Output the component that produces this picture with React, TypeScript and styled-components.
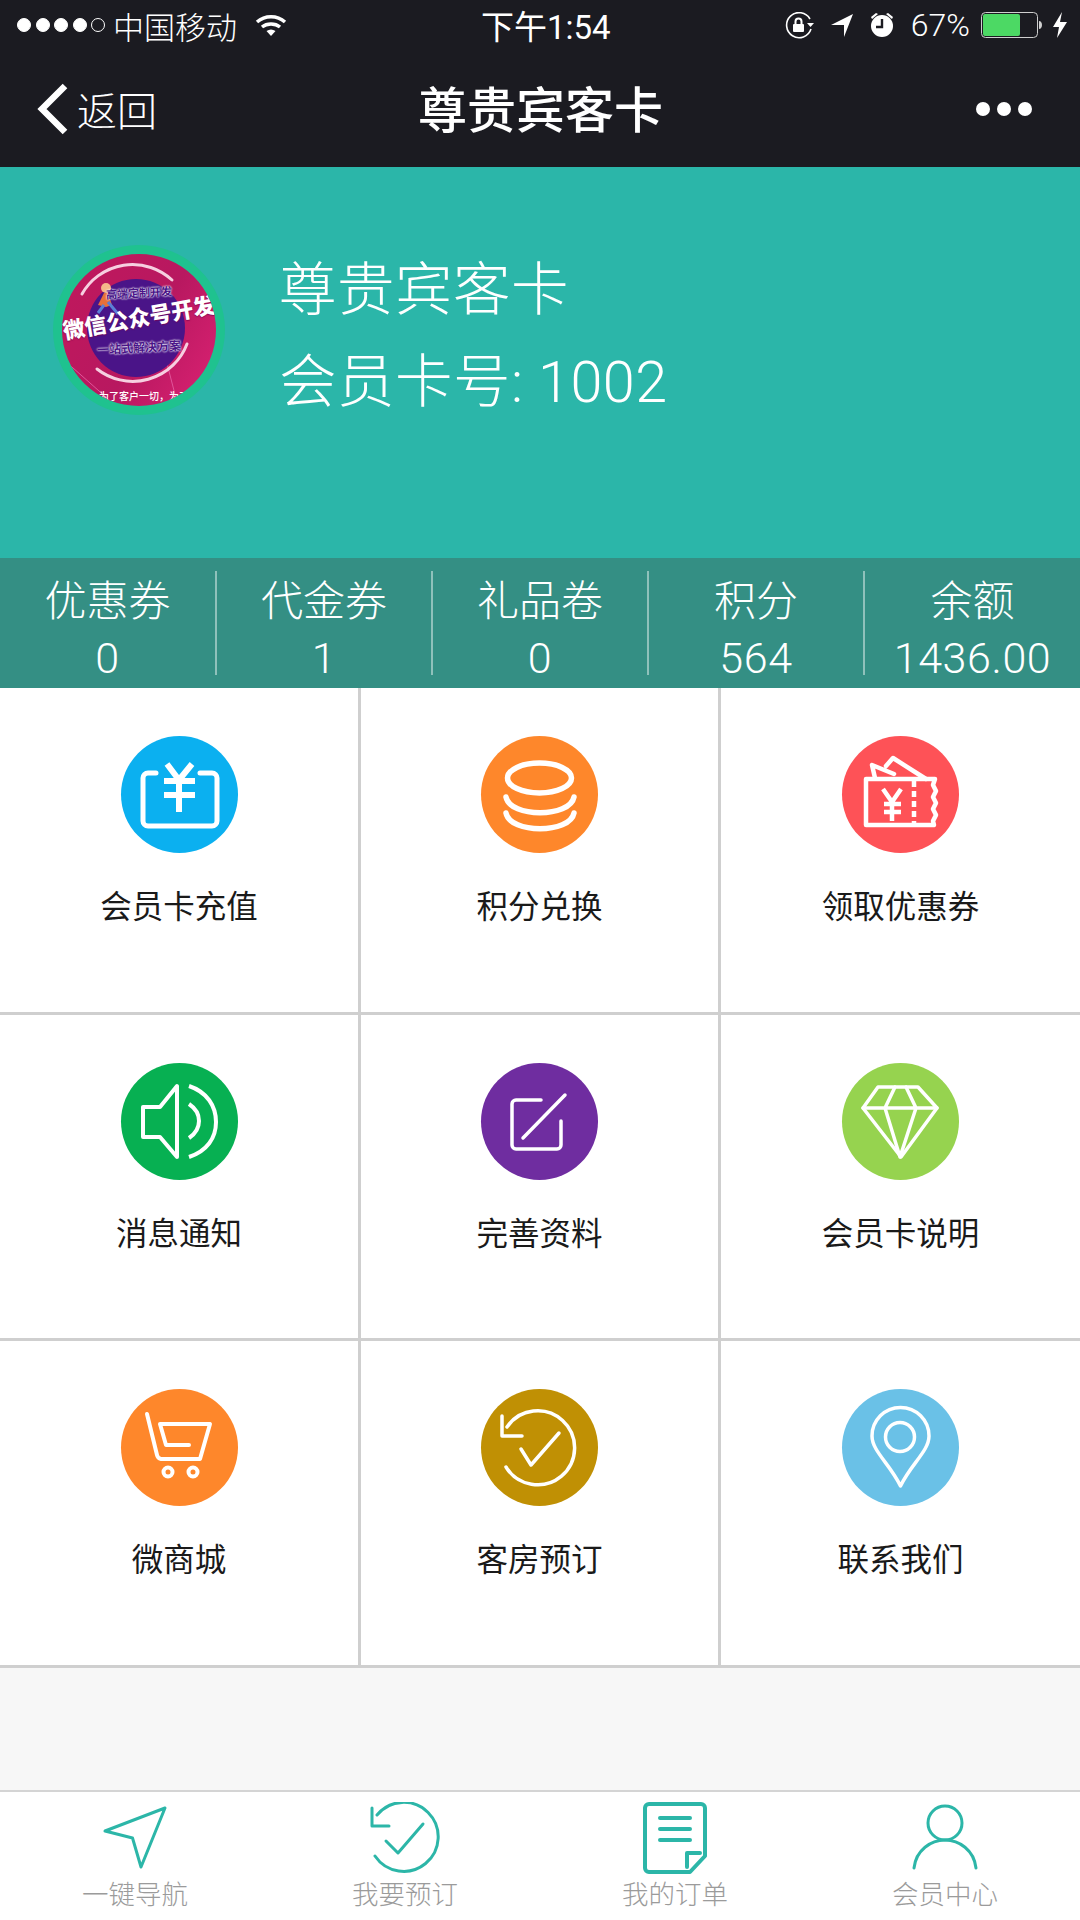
import React from 'react';
import styled, { createGlobalStyle } from 'styled-components';

const GlobalStyle = createGlobalStyle`
  html, body {
    margin: 0;
    padding: 0;
    background: #fff;
  }
  * {
    box-sizing: border-box;
  }
`;

const Page = styled.div`
  width: 1080px;
  height: 1920px;
  display: flex;
  flex-direction: column;
  overflow: hidden;
  background: #f7f7f7;
  font-family: Roboto, "Noto Sans CJK SC", sans-serif;
  font-weight: 300;
`;

const Header = styled.div`
  height: 167px;
  flex: none;
  background: #1b1b21;
  color: #fff;
`;

const StatusBar = styled.div`
  height: 50px;
  display: flex;
  align-items: center;
  font-size: 33px;
  font-weight: 400;
  padding-right: 13px;
`;

const StatusLeft = styled.div`
  width: 481px;
  display: flex;
  align-items: center;
  padding-left: 17px;
`;

const Carrier = styled.span`
  margin: 0 18px 0 8px;
  font-size: 31px;
  font-weight: 300;
`;

const StatusRight = styled.div`
  margin-left: auto;
  display: flex;
  align-items: center;
  gap: 17px;
`;

const Battery = styled.span`
  font-size: 32px;
  font-weight: 300;
`;

const NavBar = styled.div`
  height: 117px;
  display: grid;
  grid-template-columns: 1fr auto 1fr;
  align-items: center;
  padding: 0 48px 0 37px;
`;

const BackButton = styled.div`
  display: flex;
  align-items: center;
  gap: 9px;
  font-size: 40px;
`;

const Title = styled.div`
  font-size: 49px;
  font-weight: 500;
  transform: translate(6px, -2px);
`;

const MoreDots = styled.div`
  justify-self: end;
  display: flex;
  gap: 7px;
`;

const MoreDot = styled.i`
  width: 14px;
  height: 14px;
  border-radius: 50%;
  background: #fff;
`;

const Hero = styled.div`
  height: 391px;
  flex: none;
  display: flex;
  align-items: flex-start;
  gap: 54px;
  padding: 78px 0 0 53px;
  background: #2bb6a9;
  color: #fff;
`;

const Avatar = styled.div`
  position: relative;
  width: 172px;
  height: 170px;
  flex: none;
  overflow: hidden;
  border-radius: 50%;
  border: 9px solid #1fc28f;
  background: linear-gradient(120deg, #c0185c 0%, #b81860 55%, #dc2273 100%);
  display: flex;
  flex-direction: column;
  align-items: center;
  justify-content: center;
`;

const AvatarArt = styled.svg`
  position: absolute;
  inset: 0;
`;

const AvatarLines = styled.div`
  position: relative;
  display: flex;
  flex-direction: column;
  align-items: center;
  white-space: nowrap;
  transform: translateY(-9px);
`;

const AvatarSmall = styled.div<{ $size: number }>`
  font-size: ${(p) => p.$size}px;
  font-weight: 700;
  line-height: 18px;
  color: #4a1488;
  text-shadow: 0 0 2px #fff, 0 0 2px #fff;
  transform: rotate(-3deg);
`;

const AvatarBanner = styled.div`
  font-size: 22px;
  font-weight: 900;
  line-height: 32px;
  margin-bottom: 4px;
  color: #fff;
  text-shadow: 0 1px 1px rgba(120, 0, 80, 0.7);
  transform: rotate(-10deg);
`;

const AvatarFoot = styled.div`
  position: absolute;
  left: 0;
  right: 0;
  bottom: 3px;
  font-size: 10px;
  font-weight: 500;
  text-align: center;
  white-space: nowrap;
  color: #fff;
`;

const HeroText = styled.div`
  font-size: 57.5px;
  line-height: 92px;
  letter-spacing: 0.5px;
`;

const StatsBar = styled.div`
  height: 130px;
  flex: none;
  display: grid;
  grid-template-columns: 215px 216px 216px 216px 217px;
  align-items: center;
  background: #348f84;
  color: #fff;
`;

const Stat = styled.div<{ $first?: boolean }>`
  height: 104px;
  text-align: center;
  border-left: ${(p) => (p.$first ? 'none' : '2px solid rgba(255, 255, 255, 0.45)')};
`;

const StatLabel = styled.div`
  margin-top: 2px;
  font-size: 42px;
  line-height: 58px;
`;

const StatValue = styled.div`
  font-size: 43px;
  line-height: 54px;
  letter-spacing: 0.6px;
`;

const Grid = styled.div`
  flex: none;
  display: grid;
  grid-template-columns: 361px 360px 359px;
  grid-template-rows: 327px 326px 327px;
  background: #fff;
`;

const Cell = styled.div<{ $edge?: boolean }>`
  display: flex;
  flex-direction: column;
  align-items: center;
  padding-top: 48px;
  border-bottom: 3px solid #cfcfcf;
  border-right: ${(p) => (p.$edge ? 'none' : '3px solid #cfcfcf')};
`;

const IconDisc = styled.div<{ $color: string }>`
  width: 117px;
  height: 117px;
  border-radius: 50%;
  background: ${(p) => p.$color};
  color: #fff;
`;

const CellLabel = styled.div`
  margin-top: 33px;
  font-size: 31.5px;
  font-weight: 400;
  line-height: 44px;
  color: #1a1a1a;
`;

const Spacer = styled.div`
  flex: 1;
`;

const TabBar = styled.div`
  height: 130px;
  flex: none;
  display: grid;
  grid-template-columns: repeat(4, 270px);
  background: #fff;
  border-top: 2px solid #d4d4d4;
`;

const Tab = styled.div`
  display: flex;
  flex-direction: column;
  align-items: center;
  padding-top: 10px;
  color: #2cb6a8;
`;

const TabLabel = styled.div`
  font-size: 26.5px;
  line-height: 34px;
  color: #9b9b9b;
  margin-top: 4px;
`;

const SignalRow = styled.div`
  display: flex;
  align-items: center;
  gap: 4.5px;
`;

const SignalDot = styled.i<{ $off?: boolean }>`
  width: 14px;
  height: 14px;
  border-radius: 50%;
  background: ${(p) => (p.$off ? 'transparent' : '#fff')};
  border: 1px solid #fff;
`;

const DiscSvg: React.FC<{ children: React.ReactNode; width?: number }> = ({ children, width = 4 }) => (
  <svg
    width="117"
    height="117"
    viewBox="0 0 117 117"
    fill="none"
    stroke="currentColor"
    strokeWidth={width}
    strokeLinecap="round"
    strokeLinejoin="round"
  >
    {children}
  </svg>
);

const cells = [
  {
    label: '会员卡充值',
    color: '#0bb0f0',
    icon: (
      <DiscSvg width={5}>
        <path d="M35 37h-8a5 5 0 0 0-5 5v43a5 5 0 0 0 5 5h64a5 5 0 0 0 5-5V42a5 5 0 0 0-5-5h-12" />
        <path d="M46 28l12 16 13-16M58 44v32M43 45h31M43 59h31" strokeWidth="6" strokeLinecap="butt" />
      </DiscSvg>
    ),
  },
  {
    label: '积分兑换',
    color: '#fe872b',
    icon: (
      <DiscSvg width={5.5}>
        <ellipse cx="58.5" cy="42" rx="32" ry="15" />
        <path d="M25 61c4 21 64 21 68 0M25 77c4 21 64 21 68 0" />
      </DiscSvg>
    ),
  },
  {
    label: '领取优惠券',
    color: '#fe5257',
    icon: (
      <DiscSvg width={4.5}>
        <path d="M33 42l-3-13 22 9M44 30l7-8 33 21" />
        <path d="M24 43h69l-2 6 3 6-3 6 3 6-3 6 3 6-3 6 1 4H24z" />
        <path d="M72 45v48" strokeDasharray="6 4" strokeLinecap="butt" />
        <path d="M41 53l9 13 9-13M50 66v19M42 68h17M42 76h17" strokeLinecap="butt" />
      </DiscSvg>
    ),
  },
  {
    label: '消息通知',
    color: '#07b052',
    icon: (
      <DiscSvg width={4}>
        <path d="M56 23v71L39 74H22V44h17z" />
        <path d="M68 23c18 6 27 20 27 36s-9 29-27 35M68 41c6 4 10 10 10 17s-4 13-10 17" strokeLinecap="butt" />
      </DiscSvg>
    ),
  },
  {
    label: '完善资料',
    color: '#6f2da0',
    icon: (
      <DiscSvg width={3.5}>
        <path d="M60 37H35a4 4 0 0 0-4 4v41a4 4 0 0 0 4 4h41a4 4 0 0 0 4-4V58" />
        <path d="M84 32L42 75" />
      </DiscSvg>
    ),
  },
  {
    label: '会员卡说明',
    color: '#96d34f',
    icon: (
      <DiscSvg width={3.5}>
        <path d="M36 24h40l19 21-36 49-38-49z" />
        <path d="M21 45h74M53 24L43 45l15 49 16-49-10-21" />
      </DiscSvg>
    ),
  },
  {
    label: '微商城',
    color: '#fe872b',
    icon: (
      <DiscSvg width={4}>
        <path d="M26 25l10 41a5 5 0 0 0 4 4h39l10-35H39l6 21h23" />
        <circle cx="47" cy="83" r="4.5" />
        <circle cx="72" cy="83" r="4.5" />
      </DiscSvg>
    ),
  },
  {
    label: '客房预订',
    color: '#c09004',
    icon: (
      <DiscSvg width={3.5}>
        <path d="M26 38a37 37 0 1 1-1 40" />
        <path d="M21 27v20h20" />
        <path d="M40 60l10 16 28-32" />
      </DiscSvg>
    ),
  },
  {
    label: '联系我们',
    color: '#6ac1e7',
    icon: (
      <DiscSvg width={3.5}>
        <path d="M58.5 97C48 75 30 62 30 47a28.5 28.5 0 0 1 57 0c0 15-18 28-28.5 50z" />
        <circle cx="58" cy="48" r="14.5" />
      </DiscSvg>
    ),
  },
];

const stats = [
  { label: '优惠券', value: '0' },
  { label: '代金券', value: '1' },
  { label: '礼品卷', value: '0' },
  { label: '积分', value: '564' },
  { label: '余额', value: '1436.00' },
];

const TabSvg: React.FC<{ children: React.ReactNode; width?: number }> = ({ children, width = 3 }) => (
  <svg
    width="80"
    height="72"
    viewBox="0 0 80 72"
    fill="none"
    stroke="currentColor"
    strokeWidth={width}
    strokeLinecap="round"
    strokeLinejoin="round"
  >
    {children}
  </svg>
);

const tabs = [
  {
    label: '一键导航',
    icon: (
      <TabSvg>
        <path d="M10 29L70 6 46 65 37.5 36z" />
      </TabSvg>
    ),
  },
  {
    label: '我要预订',
    icon: (
      <TabSvg>
        <path d="M12 13a34.5 34.5 0 1 1-2 41" />
        <path d="M7 6v18h17" />
        <path d="M21 39l12 12 25-29" />
      </TabSvg>
    ),
  },
  {
    label: '我的订单',
    icon: (
      <TabSvg width={4}>
        <path d="M14 2h52a4 4 0 0 1 4 4v48L55 70H14a4 4 0 0 1-4-4V6a4 4 0 0 1 4-4z" />
        <path d="M25 16h30M25 27h30M25 38h30M52 65V51h13" />
      </TabSvg>
    ),
  },
  {
    label: '会员中心',
    icon: (
      <TabSvg>
        <circle cx="40" cy="21" r="17" />
        <path d="M9 66c2-18 17-28 31-28s29 10 31 28" />
      </TabSvg>
    ),
  },
];

export default function App() {
  return (
    <Page>
      <GlobalStyle />
      <Header>
        <StatusBar>
          <StatusLeft>
            <SignalRow>
              <SignalDot />
              <SignalDot />
              <SignalDot />
              <SignalDot />
              <SignalDot $off />
            </SignalRow>
            <Carrier>中国移动</Carrier>
            <svg width="32" height="24" viewBox="0 0 32 24" fill="none" stroke="#fff" strokeWidth="3.5">
              <path d="M2 9c8-7 20-7 28 0M7 14c5-4 13-4 18 0" />
              <path d="M11.5 18c3-2 6-2 9 0L16 23z" fill="#fff" stroke="none" />
            </svg>
          </StatusLeft>
          <span>下午1:54</span>
          <StatusRight>
            <svg width="29" height="27" viewBox="0 0 29 27" fill="none" stroke="#fff" strokeWidth="1.6">
              <path d="M25 7A12.5 12.5 0 1 0 26 17" />
              <path d="M22 11h7l-3.5 4z" fill="#fff" stroke="none" />
              <rect x="8" y="12" width="11" height="8" rx="1" fill="#fff" stroke="none" />
              <path d="M10.5 12V9.5a3 3 0 0 1 6 0V12" strokeWidth="2" />
            </svg>
            <svg width="22" height="23" viewBox="0 0 22 23" fill="#fff">
              <path d="M22 0L13 23v-12H0z" />
            </svg>
            <svg width="24" height="26" viewBox="0 0 24 26" fill="#fff">
              <circle cx="12" cy="14" r="11" />
              <path d="M1 5l5-4 2 1-6 5zM23 5l-5-4-2 1 6 5z" />
              <path d="M12 7v8H6" fill="none" stroke="#1b1b21" strokeWidth="2.4" />
            </svg>
            <Battery>67%</Battery>
            <svg width="62" height="26" viewBox="0 0 62 26" style={{ marginLeft: -6 }}>
              <rect x="0.5" y="0.5" width="56" height="25" rx="4" fill="none" stroke="#cfcfcf" />
              <rect x="2" y="2" width="37" height="22" rx="2" fill="#4cd964" />
              <path d="M58 9c2 0 3 2 3 4s-1 4-3 4z" fill="#cfcfcf" />
            </svg>
            <svg width="14" height="26" viewBox="0 0 14 26" fill="#fff" style={{ marginLeft: -7 }}>
              <path d="M9 0L0 15h6l-2 11 10-16H7z" />
            </svg>
          </StatusRight>
        </StatusBar>
        <NavBar>
          <BackButton>
            <svg width="31" height="52" viewBox="0 0 31 52" fill="none" stroke="#fff" strokeWidth="6.5">
              <path d="M28 3L5 26l23 23" />
            </svg>
            <span>返回</span>
          </BackButton>
          <Title>尊贵宾客卡</Title>
          <MoreDots>
            <MoreDot />
            <MoreDot />
            <MoreDot />
          </MoreDots>
        </NavBar>
      </Header>

      <Hero>
        <Avatar>
          <AvatarArt viewBox="0 0 154 152">
            <path d="M2 106L54 152M102 98L116 152" stroke="#e0559a" strokeWidth="1" />
            <circle cx="74" cy="74" r="49" fill="#4a1488" />
            <path d="M20 40A58 58 0 0 1 110 26" fill="none" stroke="#f6cfe0" strokeWidth="3" strokeLinecap="round" />
            <path d="M125 90A58 58 0 0 1 35 115" fill="none" stroke="#f6cfe0" strokeWidth="3" strokeLinecap="round" />
            <circle cx="44" cy="34" r="5" fill="#f5b78a" />
            <path d="M42 39l-6 12 8 2 6-2-4-12z" fill="#e8703a" />
            <path d="M46 48l10 12M42 51l-6 8" stroke="#5a7fd6" strokeWidth="3" />
          </AvatarArt>
          <AvatarLines>
            <AvatarSmall $size={11}>高端定制开发</AvatarSmall>
            <AvatarBanner>微信公众号开发</AvatarBanner>
            <AvatarSmall $size={12}>一站式解决方案</AvatarSmall>
          </AvatarLines>
          <AvatarFoot>，为了客户一切，为了</AvatarFoot>
        </Avatar>
        <HeroText>
          <div>尊贵宾客卡</div>
          <div>会员卡号: 1002</div>
        </HeroText>
      </Hero>

      <StatsBar>
        {stats.map((s, i) => (
          <Stat key={s.label} $first={i === 0}>
            <StatLabel>{s.label}</StatLabel>
            <StatValue>{s.value}</StatValue>
          </Stat>
        ))}
      </StatsBar>

      <Grid>
        {cells.map((c, i) => (
          <Cell key={c.label} $edge={i % 3 === 2}>
            <IconDisc $color={c.color}>{c.icon}</IconDisc>
            <CellLabel>{c.label}</CellLabel>
          </Cell>
        ))}
      </Grid>

      <Spacer />

      <TabBar>
        {tabs.map((t) => (
          <Tab key={t.label}>
            {t.icon}
            <TabLabel>{t.label}</TabLabel>
          </Tab>
        ))}
      </TabBar>
    </Page>
  );
}
